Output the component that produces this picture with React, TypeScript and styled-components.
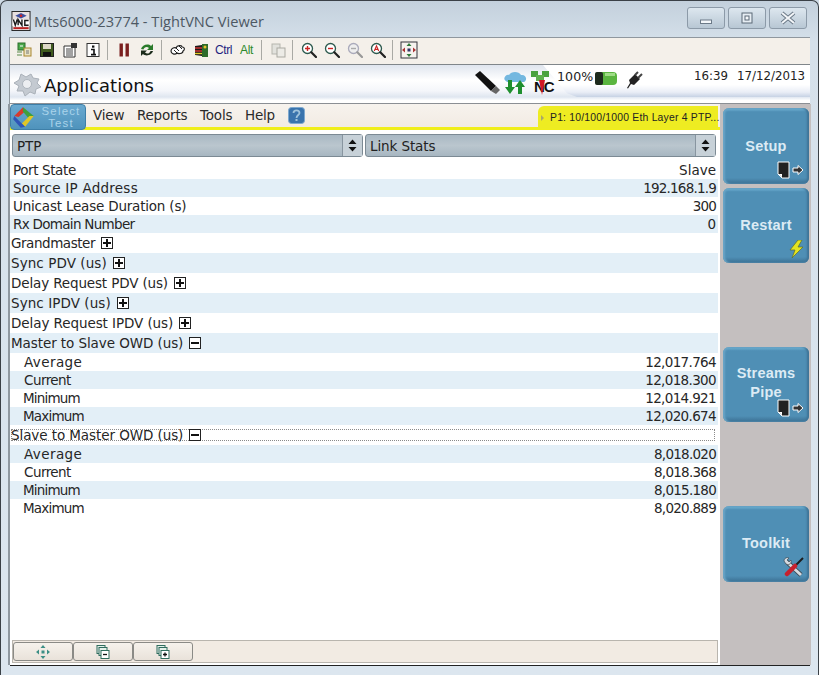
import React from 'react';
import styled, { createGlobalStyle } from 'styled-components';

const Global = createGlobalStyle`
  html, body { margin: 0; padding: 0; background: #cfdbe6; }
  #root { width: 819px; height: 675px; overflow: hidden; }
  * { box-sizing: border-box; }
`;

const Frame = styled.div`
  width: 819px; height: 675px;
  display: flex; flex-direction: column;
  padding: 0 8px 0 9px;
  background: linear-gradient(180deg, #c3d0dc 0%, #d5e0ea 6%, #dce6ef 100%);
  border: 1px solid #3a4046;
  border-width: 1px 1px 0 1px;
  border-radius: 7px 7px 0 0;
  font-family: "DejaVu Sans", sans-serif;
  color: #262626;
`;

const TitleBar = styled.div`
  height: 36px; flex: none;
  display: flex; align-items: center; gap: 3px;
  margin-right: -1px;
  padding: 3px 0 0 1px;
`;
const TitleText = styled.div`
  font-family: "Open Sans", sans-serif; font-size: 14.6px; color: #4d5863; flex: 1; white-space: nowrap;
`;
const WindowButtons = styled.div`
  display: flex; gap: 3px; margin: -5px 0 0 0; padding-right: 4px;
`;
const WinBtn = styled.div`
  width: 38px; height: 22px; border: 1px solid #8c9aa8; border-radius: 3px;
  background: linear-gradient(180deg, #dde7ef, #b8c7d4);
  display: flex; align-items: center; justify-content: center;
`;

const Toolbar = styled.div`
  height: 28px; flex: none; display: flex; align-items: center;
  background: #f4f0ea; border-top: 1px solid #8f979e; border-bottom: 1px solid #80868a;
  padding: 0 0 3px 2px;
  box-shadow: -1px 0 0 #8f98a0;
`;
const ToolBtn = styled.div`
  width: 23px; height: 22px; display: flex; align-items: center; justify-content: center; flex: none;
`;
const ToolLabel = styled.span<{ $c: string }>`
  font-family: "Liberation Sans", sans-serif; font-size: 12px; letter-spacing: -0.4px; color: ${p => p.$c};
`;
const ToolSep = styled.div`
  width: 8px; height: 20px; flex: none; position: relative;
  &::after { content: ''; position: absolute; left: 3px; top: 0; bottom: 0; width: 1px; background: #a9a9a4; }
`;

const Header = styled.div`
  height: 39px; flex: none; position: relative; display: flex; align-items: center;
  background: linear-gradient(180deg, #dfe5ee 0%, #ffffff 40%, #f4f6fa 68%, #dfe6f0 84%, #ffffff 93%);
  border-bottom: 1px solid #8b8f94;
  padding-left: 2px;
  box-shadow: -1px 0 0 #8f98a0;
`;
const HeaderPlate = styled.div`
  position: absolute; top: 0; bottom: 6px; left: 533px; right: 0;
  background: linear-gradient(180deg, #ffffff 62%, #e9edf6 85%, #c6d2e4 100%);
  clip-path: polygon(0 0, 100% 0, 100% 100%, 34px 100%, 24px 88%);
`;
const AppTitle = styled.div`
  position: relative; font-size: 18px; margin-left: 2px; padding-top: 3px; color: #111; flex: 1;
`;
const Status = styled.div`
  position: relative; display: flex; align-items: flex-start; height: 100%;
`;
const StatusIcon = styled.div<{ $w: number }>`
  width: ${p => p.$w}px; flex: none; padding-top: 6px; display: flex; justify-content: center;
`;
const StatusText = styled.div`
  width: 36px; flex: none; font-size: 12.6px; color: #222; padding-top: 4px; white-space: nowrap; letter-spacing: 0.1px;
`;
const Clock = styled.div`
  margin-left: 44px; width: 116px; flex: none; display: flex; gap: 9px; padding-top: 4px;
  font-size: 11.8px; color: #222; white-space: nowrap;
`;

const Body = styled.div`
  flex: 1; display: flex; min-height: 0;
  box-shadow: -2px 0 0 #8f98a0;
`;
const MainCol = styled.div`
  width: 710px; flex: none; display: flex; flex-direction: column; background: #fff;
`;
const MenuBar = styled.div`
  height: 26px; flex: none; display: flex; align-items: stretch; position: relative;
  background: linear-gradient(180deg, #f7f3ee, #f2ebe3);
  border-bottom: 3px solid #f0ee1a;
`;
const SelectTest = styled.div`
  width: 76px; height: 26px; flex: none; border-radius: 4px; display: flex; align-items: center;
  background: linear-gradient(180deg, #6aa9d0, #4f93bc); border: 1px solid #3e7fa8; padding-left: 0;
  position: relative; z-index: 1;
`;
const SelectText = styled.div`
  flex: 1; text-align: center; font-family: "Liberation Sans", sans-serif; font-size: 11.4px; line-height: 12px;
  color: #a9d3ea; letter-spacing: 1.2px;
`;
const MenuItems = styled.div`
  display: flex; align-items: center; gap: 12.7px; margin-left: 7px; flex: 1; padding-bottom: 1px;
`;
const MenuItem = styled.span`
  font-size: 13.5px; color: #2a2a2a; letter-spacing: -0.2px;
`;
const PortTag = styled.div`
  width: 180px; height: 23px; flex: none; margin-top: 2px; margin-right: 2px; background: #eeec22; border-radius: 6px 0 0 0;
  display: flex; align-items: center; gap: 6px; padding-left: 3px;
  font-family: "Liberation Sans", sans-serif; font-size: 10.4px; letter-spacing: 0.2px; color: #222; white-space: nowrap;
`;

const Selects = styled.div`
  display: flex; gap: 2px; flex: none; padding: 4px 4px 4px 2px; height: 31px;
`;
const SelectBox = styled.div`
  flex: 1; height: 23px; display: flex; align-items: center; justify-content: space-between;
  background: linear-gradient(180deg, #a9b8c3, #bac6ce 50%, #a7b6c1);
  border: 1px solid #7c8a94; border-radius: 3px;
  font-size: 13.5px; letter-spacing: -0.1px; padding-left: 4px; color: #222;
`;
const SelectArrows = styled.div`
  width: 20px; height: 100%; display: flex; align-items: center; justify-content: center;
  border-left: 1px solid #8895a0; background: #c7d1d8;
`;

const Table = styled.div`
  flex: 1; display: flex; flex-direction: column; padding-right: 2px;
`;
const Row = styled.div<{ $alt?: boolean; $h: number; $pad: number }>`
  height: ${p => p.$h}px; flex: none; display: flex; align-items: center; justify-content: space-between;
  padding: 0 2px 0 ${p => p.$pad}px;
  background: ${p => (p.$alt ? '#e3eff7' : '#fff')};
  font-size: 13.5px; color: #262626; white-space: nowrap;
  position: relative;
`;
const FocusBox = styled.div`
  position: absolute; left: 1px; right: 3px; top: 4px; bottom: 4px; border: 1px dotted #8a8a8a;
`;
const RowLabel = styled.span<{ $ls: number }>`
  display: flex; align-items: center; gap: 6px; position: relative; letter-spacing: ${p => p.$ls}px;
`;
const RowValue = styled.span<{ $ls: number }>`
  letter-spacing: ${p => p.$ls}px;
`;
const Toggle = styled.span`
  width: 12px; height: 12px; flex: none; border: 1px solid #222; background: #fff; display: inline-flex; align-items: center; justify-content: center;
  position: relative;
`;
const Footer = styled.div`
  height: 23px; flex: none; margin: 0 2px 2px 2px; background: #f2ebe3; border: 1px solid #b9b5ae; display: flex; padding: 1px 0 0 0;
`;
const FootBtn = styled.div`
  width: 60px; height: 19px; border: 1px solid #8a8a86; border-radius: 3px; background: linear-gradient(180deg, #f6f2ec, #e9e2da);
  display: flex; align-items: center; justify-content: center;
`;

const Side = styled.div`
  width: 91px; flex: none; background: #c4bfbf; display: flex; flex-direction: column; padding: 4px 2px 0 3px;
`;
const SideBtn = styled.div<{ $mt: number; $h: number }>`
  height: ${p => p.$h}px; margin-top: ${p => p.$mt}px; flex: none; position: relative;
  background: linear-gradient(180deg, #76b8da 0, #4f8fb5 5%, #4f8fb5 92%, #3b6f92 100%);
  border-radius: 6px; box-shadow: inset 2px 0 2px #6aa5c6, inset -2px 0 2px #3f7497;
  color: #dcebf4; font-family: "Liberation Sans", sans-serif; font-weight: 700; font-size: 14.5px;
  text-align: center; line-height: 19px; letter-spacing: 0.2px;
`;
const SideText = styled.div<{ $pt: number }>`
  padding-top: ${p => p.$pt}px;
`;
const SideIcon = styled.div`
  position: absolute; right: 5px; bottom: 5px; display: flex; line-height: 0;
`;
const BottomStrip = styled.div`
  height: 10px; flex: none;
  border-top: 1px solid #222;
`;

const I = ({ w = 16, h = 16, v = '0 0 16 16', children }: { w?: number; h?: number; v?: string; children: React.ReactNode }) => (
  <svg width={w} height={h} viewBox={v} style={{ display: 'block', flex: 'none' }}>{children}</svg>
);

const VncLogo = () => (
  <I w={20} h={20} v="0 0 20 21">
    <rect x="0.5" y="0.5" width="19" height="20" fill="#e8e0e0" stroke="#222" />
    <path d="M4 5 L10 2 L16 5 L10 8Z" fill="#3c4fa0" />
    <circle cx="10" cy="5" r="1.4" fill="#c22" />
    <rect x="1" y="9" width="18" height="7" fill="#fff" />
    <path d="M2 9 L4 15 L6 9 M7 15 V9 L11 15 V9 M18 10 H14 V15 H18" fill="none" stroke="#1a1a1a" strokeWidth="1.5" />
    <rect x="2" y="17" width="16" height="2" fill="#b22" />
  </I>
);
const Magnifier = ({ mark }: { mark: React.ReactNode }) => (
  <I>
    <circle cx="6.5" cy="6.5" r="5" fill="#fff" stroke="#2d5a4e" strokeWidth="1.3" />
    <path d="M10.3 10.3 L15 15" stroke="#222" strokeWidth="2.2" strokeLinecap="round" />
    {mark}
  </I>
);

const Tool = [
  <I key="a"><rect x="2" y="1" width="7" height="7" fill="#4aa84a" stroke="#2c6e2c" /><rect x="8" y="6" width="7" height="8" fill="#e9e3c4" stroke="#a8852e" /><path d="M1 10 h5 M1 13 h5" stroke="#5a8a4a" /><path d="M4 4 h3" stroke="#fff" /><path d="M10 9h3M10 11h3" stroke="#777" /></I>,
  <I key="b"><rect x="1.5" y="1.5" width="13" height="13" fill="#3f5a1e" stroke="#222" /><rect x="4" y="2" width="8" height="5" fill="#dcd7c6" /><rect x="4" y="10" width="8" height="4" fill="#111" /></I>,
  <I key="c"><path d="M2 4 H13 V15 H2Z" fill="#fff" stroke="#333" /><path d="M4 7h7M4 9h7M4 11h7M4 13h7" stroke="#444" /><rect x="9" y="1" width="6" height="5" fill="#333" /></I>,
  <I key="d"><rect x="2" y="1.5" width="12" height="13" fill="#fff" stroke="#333" /><rect x="7" y="3.5" width="2.4" height="2.2" fill="#111" /><path d="M6 7.5h3v4.5M6 12.6h5" stroke="#111" strokeWidth="1.6" fill="none" /></I>,
  null,
  <I key="e"><rect x="3.5" y="1.5" width="3.4" height="13" fill="#7a1f1f" /><rect x="9.5" y="1.5" width="3.4" height="13" fill="#7a1f1f" /></I>,
  <I key="f"><path d="M2 7 C3 3 9 1 12 4 L14 2 V8 H8 L10 6 C8 4 5 5 4.5 7.5Z" fill="#2a7a2a" /><path d="M14 9 C13 13 7 15 4 12 L2 14 V8.5 H8 L6 10.5 C8 12.5 11 11.5 11.5 9Z" fill="#1b2b1b" /></I>,
  null,
  <I key="g"><path d="M1 9 C1 6 5 5 6 6 C7 3 12 3 12 5 C15 5 15 8 13 9 C13 12 8 12 7 11 C5 13 1 12 1 9Z" fill="#fff" stroke="#222" strokeWidth="1.2" /><path d="M6 6 L9 9 M9 4 L12 7 M4 8 L7 11" stroke="#222" /></I>,
  <I key="h"><rect x="9" y="2" width="6" height="13" fill="#2e6b2a" /><path d="M2 4 L9 3 V14 L2 13Z" fill="#1b1b1b" /><path d="M2 6h7M2 9h7" stroke="#c33" strokeWidth="1.4" /><path d="M2 11.5h7" stroke="#e2c92a" strokeWidth="1.4" /><circle cx="12" cy="5" r="1.5" fill="#e8c22a" /></I>,
  <ToolLabel key="i" $c="#1f1f80">Ctrl</ToolLabel>,
  <ToolLabel key="j" $c="#2c8a2c">Alt</ToolLabel>,
  null,
  <I key="k"><rect x="2" y="2" width="8" height="10" fill="#e2e2dd" stroke="#b5b5ae" /><rect x="7" y="6" width="8" height="9" fill="#ecebe6" stroke="#aaa9a2" /></I>,
  null,
  <Magnifier key="l" mark={<path d="M4 6.5h5M6.5 4v5" stroke="#c22" strokeWidth="1.4" />} />,
  <Magnifier key="m" mark={<path d="M4 6.5h5" stroke="#c22" strokeWidth="1.4" />} />,
  <I key="n"><circle cx="6.5" cy="6.5" r="5" fill="#eee" stroke="#aab" strokeWidth="1.3" /><path d="M10.3 10.3 L15 15" stroke="#999" strokeWidth="2.2" strokeLinecap="round" /><path d="M4 6.5h5" stroke="#aaa" strokeWidth="1.4" /></I>,
  <Magnifier key="o" mark={<path d="M4.3 9 L6.5 3.8 L8.7 9 M5.2 7.4h2.6" stroke="#c22" strokeWidth="1.1" fill="none" />} />,
  null,
  <I w={18} h={18} v="0 0 18 18" key="p"><rect x="1" y="1" width="16" height="16" fill="#f6f2ee" stroke="#33333a" /><path d="M9 2 L11.5 5 H6.5Z M9 16 L11.5 13 H6.5Z" fill="#2f7a3a" /><path d="M2 9 L5 6.5 V11.5Z M16 9 L13 6.5 V11.5Z" fill="#a33" /><rect x="7.5" y="7.5" width="3" height="3" fill="#336" /></I>,
];

const PageArrow = () => (
  <I w={27} h={18} v="0 0 27 18">
    <path d="M1 1 H12 V17 H5 L1 13Z" fill="#222" stroke="#fff" strokeWidth="1" />
    <path d="M1.5 13 H5 V16.5" fill="#fff" />
    <path d="M16 7 H21 V4.5 L26 9 L21 13.5 V11 H16Z" fill="#333" stroke="#fff" strokeWidth="1" />
  </I>
);

const Plus = () => <I w={10} h={10} v="0 0 10 10"><path d="M5 1v8M1 5h8" stroke="#111" strokeWidth="2" /></I>;
const Minus = () => <I w={10} h={10} v="0 0 10 10"><path d="M1 5h8" stroke="#111" strokeWidth="2" /></I>;

type R = { label: string; ls: number; value?: string; vls?: number; h: number; pad: number; alt?: boolean; toggle?: 'plus' | 'minus'; focus?: boolean };
const rows: R[] = [
  { label: 'Port State', ls: -0.4, value: 'Slave', vls: 0, h: 18, pad: 3 },
  { label: 'Source IP Address', ls: 0.24, value: '192.168.1.9', vls: -0.8, h: 18, pad: 3, alt: true },
  { label: 'Unicast Lease Duration (s)', ls: -0.2, value: '300', vls: -0.8, h: 18, pad: 3 },
  { label: 'Rx Domain Number', ls: -0.7, value: '0', vls: 0, h: 18, pad: 3, alt: true },
  { label: 'Grandmaster', ls: -0.45, h: 20, pad: 1, toggle: 'plus' },
  { label: 'Sync PDV (us)', ls: 0.08, h: 20, pad: 1, toggle: 'plus', alt: true },
  { label: 'Delay Request PDV (us)', ls: -0.14, h: 20, pad: 1, toggle: 'plus' },
  { label: 'Sync IPDV (us)', ls: 0.07, h: 20, pad: 1, toggle: 'plus', alt: true },
  { label: 'Delay Request IPDV (us)', ls: -0.08, h: 20, pad: 1, toggle: 'plus' },
  { label: 'Master to Slave OWD (us)', ls: -0.08, h: 20, pad: 1, toggle: 'minus', alt: true },
  { label: 'Average', ls: 0.4, value: '12,017.764', vls: -0.65, h: 18, pad: 14 },
  { label: 'Current', ls: -0.55, value: '12,018.300', vls: -0.65, h: 18, pad: 14, alt: true },
  { label: 'Minimum', ls: -0.8, value: '12,014.921', vls: -0.65, h: 18, pad: 13 },
  { label: 'Maximum', ls: -0.8, value: '12,020.674', vls: -0.65, h: 18, pad: 13, alt: true },
  { label: 'Slave to Master OWD (us)', ls: -0.08, h: 20, pad: 1, toggle: 'minus', focus: true },
  { label: 'Average', ls: 0.4, value: '8,018.020', vls: -0.75, h: 18, pad: 14, alt: true },
  { label: 'Current', ls: -0.55, value: '8,018.368', vls: -0.75, h: 18, pad: 14 },
  { label: 'Minimum', ls: -0.8, value: '8,015.180', vls: -0.75, h: 18, pad: 13, alt: true },
  { label: 'Maximum', ls: -0.8, value: '8,020.889', vls: -0.75, h: 18, pad: 13 },
];

const Arrows = () => <I w={9} h={13} v="0 0 9 13"><path d="M4.5 0.5 L8.5 5 H0.5Z M4.5 12.5 L8.5 8 H0.5Z" fill="#111" /></I>;

export default function App() {
  return (
    <Frame>
      <Global />
      <TitleBar>
        <VncLogo />
        <TitleText>Mts6000-23774 - TightVNC Viewer</TitleText>
        <WindowButtons>
          <WinBtn><I w={12} h={12} v="0 0 12 12"><rect x="0.5" y="8" width="11" height="3.5" fill="#f4f7fa" stroke="#6c7a88" /></I></WinBtn>
          <WinBtn><I w={12} h={12} v="0 0 12 12"><rect x="1" y="1" width="10" height="10" fill="#e6edf3" stroke="#5b6976" /><rect x="4" y="4" width="4" height="4" fill="#f4f7fa" stroke="#5b6976" /></I></WinBtn>
          <WinBtn><I w={16} h={14} v="0 0 16 14"><path d="M2 2 L14 12 M14 2 L2 12" stroke="#6c7a88" strokeWidth="4" /><path d="M2 2 L14 12 M14 2 L2 12" stroke="#f2f5f8" strokeWidth="2" /></I></WinBtn>
        </WindowButtons>
      </TitleBar>
      <Toolbar>
        {Tool.map((t, i) => (t ? <ToolBtn key={i}>{t}</ToolBtn> : <ToolSep key={i} />))}
      </Toolbar>
      <Header>
        <HeaderPlate />
        <I w={30} h={26} v="0 0 30 26">
          <path d="M9 3 L14 6 L19 3 L21 7 L27 8 L25 12 L29 16 L24 18 L23 23 L18 21 L13 25 L11 20 L5 20 L7 15 L2 12 L7 9Z" fill="#c4cad1" stroke="#aab1b9" />
          <circle cx="15" cy="13" r="4.5" fill="#eceef1" stroke="#aeb5bd" />
        </I>
        <AppTitle>Applications</AppTitle>
        <Status>
          <StatusIcon $w={27}>
            <I w={26} h={25} v="0 0 26 25"><path d="M0 4 L5 0 L21 15 L16 20Z" fill="#111" /><path d="M16 20 L21 15 L25 19 L21 23Z" fill="#666" /></I>
          </StatusIcon>
          <StatusIcon $w={27}>
            <I w={24} h={24} v="0 0 24 24"><path d="M3 10 C-1 8 3 3 6 4 C8 0 16 0 18 4 C23 3 25 9 21 11 H4Z" fill="#74b8e0" /><path d="M5 9h4v7h3l-5 7-5-7h3z" fill="#1f8f2f" /><path d="M15 23v-7h-3l5-7 5 7h-3v7z" fill="#1f8f2f" /></I>
          </StatusIcon>
          <StatusIcon $w={29}>
            <I w={26} h={25} v="0 0 26 25">
              <rect x="1" y="0" width="7" height="6" fill="#4aa23f" />
              <rect x="12" y="0" width="7" height="6" fill="#4aa23f" />
              <rect x="6" y="4" width="8" height="6" fill="#5fb04f" />
              <text x="4" y="21" fontFamily="Liberation Sans, sans-serif" fontWeight="700" fontSize="15" fill="#111" letterSpacing="-1">NC</text>
              <path d="M9 9 L15 9 L12 24Z" fill="#d01824" />
            </I>
          </StatusIcon>
          <StatusText>100%</StatusText>
          <StatusIcon $w={26}>
            <I w={24} h={16} v="0 0 24 16"><rect x="1" y="1" width="22" height="13" rx="4" fill="#5ab53f" /><rect x="1" y="1" width="8" height="13" rx="2" fill="#1d2a1d" /><rect x="11" y="2" width="10" height="3" fill="#9fdc86" /></I>
          </StatusIcon>
          <StatusIcon $w={31}>
            <I w={17} h={18} v="0 0 17 18"><path d="M1 17 L4 12 L3 9 L9 3 L14 8 L8 14 L5 13 L2 17.5Z" fill="#222" /><path d="M9 4 L12 1 M12 7 L16 3" stroke="#444" strokeWidth="2" /></I>
          </StatusIcon>
          <Clock><span>16:39</span><span>17/12/2013</span></Clock>
        </Status>
      </Header>
      <Body>
        <MainCol>
          <MenuBar>
            <SelectTest>
              <I w={26} h={24} v="0 0 24 22"><path d="M3 10 L11 2 L14 5 L7 11Z" fill="#d63a2e" /><path d="M11 2 L21 10 L17 13 L11 6Z" fill="#3f9f3c" /><path d="M21 10 L13 20 L10 17 L17 10Z" fill="#e0c628" /><path d="M3 10 L13 20 L9 21 L2 13Z" fill="#2f55b8" /></I>
              <SelectText>Select<br />Test</SelectText>
            </SelectTest>
            <MenuItems>
              <MenuItem>View</MenuItem>
              <MenuItem>Reports</MenuItem>
              <MenuItem>Tools</MenuItem>
              <MenuItem>Help</MenuItem>
              <I w={17} h={17} v="0 0 17 17"><rect x="0.5" y="0.5" width="16" height="16" rx="3" fill="#3a74ad" stroke="#7fa9cf" /><path d="M5.5 6 C5.5 2.5 11.5 2.5 11.5 6 C11.5 8 8.5 8 8.5 11" stroke="#9fc3dc" strokeWidth="1.8" fill="none" /><rect x="7.5" y="12" width="2" height="2" fill="#9fc3dc" /></I>
            </MenuItems>
            <PortTag>
              <I w={3} h={6} v="0 0 3 6"><path d="M0 0 L3 3 L0 6Z" fill="#a8a86a" /></I>
              P1: 10/100/1000 Eth Layer 4 PTP...
            </PortTag>
          </MenuBar>
          <Selects>
            <SelectBox>PTP<SelectArrows><Arrows /></SelectArrows></SelectBox>
            <SelectBox>Link Stats<SelectArrows><Arrows /></SelectArrows></SelectBox>
          </Selects>
          <Table>
            {rows.map((r, i) => (
              <Row key={i} $alt={r.alt} $h={r.h} $pad={r.pad}>
                {r.focus && <FocusBox />}
                <RowLabel $ls={r.ls}>
                  {r.label}
                  {r.toggle && <Toggle>{r.toggle === 'plus' ? <Plus /> : <Minus />}</Toggle>}
                </RowLabel>
                {r.value && <RowValue $ls={r.vls ?? 0}>{r.value}</RowValue>}
              </Row>
            ))}
          </Table>
          <Footer>
            <FootBtn>
              <I><path d="M8 1 L10.5 4 H5.5Z M8 15 L10.5 12 H5.5Z M1 8 L4 5.5 V10.5Z M15 8 L12 5.5 V10.5Z" fill="#3c8f86" /><rect x="6.5" y="6.5" width="3" height="3" fill="#3c8f86" /></I>
            </FootBtn>
            <FootBtn>
              <I><rect x="2" y="1.5" width="8" height="8" fill="#e4efe9" stroke="#2f6d5e" /><rect x="4" y="3.5" width="8" height="8" fill="#e4efe9" stroke="#2f6d5e" /><rect x="6" y="6.5" width="8" height="8" fill="#fff" stroke="#2f6d5e" /><path d="M8 10.5h4" stroke="#111" strokeWidth="1.3" /></I>
            </FootBtn>
            <FootBtn>
              <I><rect x="2" y="1.5" width="8" height="8" fill="#e4efe9" stroke="#2f6d5e" /><rect x="4" y="3.5" width="8" height="8" fill="#e4efe9" stroke="#2f6d5e" /><rect x="6" y="6.5" width="8" height="8" fill="#fff" stroke="#2f6d5e" /><path d="M8 10.5h4M10 8.5v4" stroke="#111" strokeWidth="1.3" /></I>
            </FootBtn>
          </Footer>
        </MainCol>
        <Side>
          <SideBtn $mt={0} $h={76}>
            <SideText $pt={29}>Setup</SideText>
            <SideIcon><PageArrow /></SideIcon>
          </SideBtn>
          <SideBtn $mt={4} $h={75}>
            <SideText $pt={28}>Restart</SideText>
            <SideIcon>
              <I w={15} h={18} v="0 0 15 18"><path d="M9 0 L1 10 H6 L3 18 L14 7 H9 L13 0Z" fill="#e4e420" stroke="#5f6f2a" strokeWidth="0.7" /></I>
            </SideIcon>
          </SideBtn>
          <SideBtn $mt={84} $h={75}>
            <SideText $pt={17}>Streams<br />Pipe</SideText>
            <SideIcon><PageArrow /></SideIcon>
          </SideBtn>
          <SideBtn $mt={84} $h={76}>
            <SideText $pt={28}>Toolkit</SideText>
            <SideIcon>
              <I w={21} h={20} v="0 0 21 20">
                <path d="M4 5 L18 18" stroke="#3c4a55" strokeWidth="4.5" />
                <path d="M4 5 L18 18" stroke="#d5dae0" strokeWidth="3" />
                <path d="M1 4 C1 1 4 0 6 1 L4 3 L6 5 L8 3 C9 6 6 9 3 7Z" fill="#d5dae0" stroke="#3c4a55" strokeWidth="0.7" />
                <path d="M20 1 L12 9" stroke="#1d1d1d" strokeWidth="2" />
                <path d="M12 9 L4 17" stroke="#c8202c" strokeWidth="4.5" strokeLinecap="round" />
              </I>
            </SideIcon>
          </SideBtn>
        </Side>
      </Body>
      <BottomStrip />
    </Frame>
  );
}
